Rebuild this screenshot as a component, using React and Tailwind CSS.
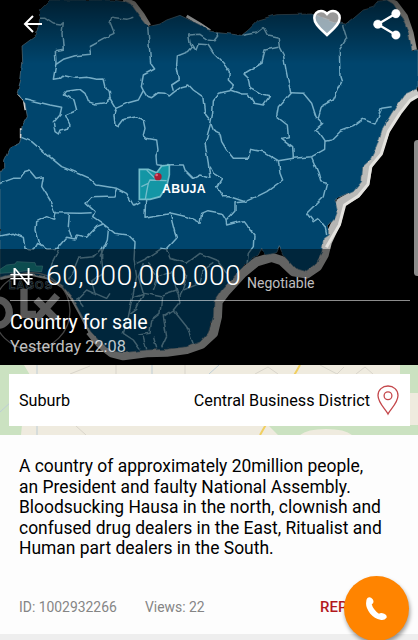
import React from "react";

const LAND =
  "M150 0 L118 32 118 80 104 110 66 138 68 185 62 240 52 278 75 310 82 350 66 378 64 412 58 430 32 442 14 480 14 500 0 520 V832 L40 822 90 818 150 834 188 858 216 892 242 940 268 990 300 1025 335 1052 370 1058 440 1050 500 1048 560 1040 600 1026 624 1000 640 950 642 905 665 870 720 810 750 780 775 765 785 745 798 765 830 758 838 740 850 765 885 805 920 815 945 795 965 760 970 715 985 705 985 680 1008 655 1014 640 1005 600 1060 575 1085 545 1088 500 1110 480 1130 440 1148 385 1175 340 1215 282 1254 265 V150 L1236 150 1226 100 1205 50 1180 12 1160 0 1135 4 1120 22 1090 30 1055 60 1040 72 1010 68 940 42 830 44 775 60 745 90 725 106 655 98 624 92 600 75 540 46 500 60 480 72 445 80 420 50 395 15 370 5 340 0 Z";

// State borders, drawn on a 1254 x 1095 grid
const BORDERS = [
  "M118 55 L135 55 160 72 182 75 190 68 186 100 190 148 166 152 168 190 160 238 178 235 188 226 225 235 262 232 290 238 312 237 318 262 328 275 330 295 348 325",
  "M168 193 L190 178 225 167 272 163 268 138 310 115 342 100 330 70 335 52 380 58 400 52",
  "M443 80 L448 140 452 190 464 207 430 225 424 260 430 272 415 300 385 308 348 325 342 345 345 375 355 380 372 358 410 350 430 362 435 385 430 405 440 415 470 420 474 450 468 470 470 494",
  "M430 272 L440 288 455 293 475 278 495 280 508 288 520 278 545 260 566 255 580 270 608 290 614 340 630 360",
  "M624 134 L595 132 588 150 578 140 565 155 532 168 530 195 538 240 515 255 520 272",
  "M624 120 L600 103 566 105 570 128 578 140 M624 120 L645 122 656 108 650 98",
  "M75 296 L110 305 150 315 185 322 180 345 160 368 165 395 175 402 180 390 205 385 210 375 196 345 230 330 222 300 190 285 200 274 240 268 255 280 265 305 285 312 315 308 330 295",
  "M64 412 L95 425 130 455 185 500 240 522 270 535 290 555 350 565 380 580 400 615 418 605",
  "M0 550 L40 535 60 535 72 518 90 513 108 535 130 530 125 560 150 600 165 638 240 640 272 638",
  "M470 494 L500 498 510 494 550 495 555 510 580 535 600 525 615 530 630 535 625 490 615 430 632 370",
  "M350 565 L342 588 275 590 258 610 285 635 278 650 310 672 345 700 385 705 405 725 402 780 410 830 400 880 385 950 370 1000 400 1020 420 1048",
  "M208 642 L205 680 215 715 M0 708 L40 700 70 712 75 745 100 748 110 730 120 735 108 690 110 665 140 650 160 658 165 638",
  "M120 735 L145 748 175 745 200 715 225 720 230 705 260 712 290 680 310 672 M325 690 L322 720 300 770",
  "M150 828 L155 790 175 750 M205 840 L225 800 235 775 280 770 305 745 305 775 310 820 275 845 285 880 320 895 330 880 M230 900 L260 870 282 880 M250 920 L230 895",
  "M437 600 L435 655 515 640 560 650 600 670 605 640 624 632 665 640 678 660 705 630 705 608 735 605",
  "M510 640 L525 700 530 715 500 748 485 745 440 775 410 790 M500 750 L510 775 560 790 600 760 650 780 680 820 M640 790 L610 810 600 850 550 870",
  "M430 790 L415 830 430 880 485 890 480 940 455 960 450 1000 415 1005 M485 885 L530 870 540 905 520 930 490 950 500 1010 M520 930 L560 980 580 1032",
  "M445 790 L475 830 460 870 M475 830 L515 815 530 870 M540 890 L560 830 540 800 M400 890 L430 880 410 925 390 940 M430 1010 L440 1048 M460 1010 L470 1045 M500 1010 L485 1042",
  "M624 135 L640 160 670 190 688 215 685 240 700 255 690 272 655 280 640 300 638 340 632 370 640 390 660 400 665 425 680 450 700 475 745 475 752 448 790 455 835 482 880 475 935 470 974 448 975 422 960 400 945 390 968 370 948 350 935 310 910 280 872 278",
  "M690 270 L725 282 745 282 762 310 790 315 808 290 785 285 750 265 745 235 732 222 785 190 795 150 835 142",
  "M728 106 L770 98 790 82 802 105 835 112 838 142 850 165 860 220 872 278 855 298 835 320 830 350 862 375 865 410 845 415 878 440 880 475",
  "M1028 75 L1040 115 1018 150 1020 230 1025 245 1000 300 965 320 955 355",
  "M974 424 L995 420 1020 395 1060 380 1090 358 1125 372 1145 325 1175 320",
  "M835 482 L840 520 848 540 800 575 770 590 735 605 690 590 670 590 650 560 665 535 640 520 630 500",
  "M935 472 L955 520 962 545 980 550 970 590 920 640 940 665 955 655 975 680 980 705",
  "M678 660 L680 675 730 662 762 705 760 740 745 760 740 800",
];

const CountryMap = () => (
  <svg viewBox="0 0 1254 1095" className="absolute inset-0 h-full w-full" preserveAspectRatio="none">
    <defs>
      <linearGradient id="rim" x1="0" y1="0" x2="1" y2="0">
        <stop offset="0" stopColor="#b5b7b6" />
        <stop offset="0.75" stopColor="#b5b5b3" />
        <stop offset="1" stopColor="#c8c8c5" />
      </linearGradient>
      <filter id="soft">
        <feGaussianBlur stdDeviation="2" />
      </filter>
      <filter id="rough" x="0" y="0" width="1" height="1" colorInterpolationFilters="sRGB">
        <feTurbulence type="fractalNoise" baseFrequency="0.04" numOctaves="1" seed="4" />
        <feDisplacementMap in="SourceGraphic" scale="12" xChannelSelector="R" yChannelSelector="G" />
      </filter>
      <clipPath id="landClip">
        <path d={LAND} />
      </clipPath>
    </defs>
    <rect width="1254" height="1095" fill="#000" />
    <g filter="url(#soft)" fill="none" strokeLinejoin="round">
      <path d="M0 834 L40 824 90 820 150 834 190 860 218 896 245 945 270 993 300 1028" stroke="#b3babb" strokeWidth="13" />
      <path
        d="M270 993 L300 1030 335 1058 370 1067 440 1058 500 1056 560 1048 605 1032 640 1000 652 950 654 905 675 877 727 820 770 785 815 772 845 782 880 815 920 822 952 800 972 765 982 725 1010 665 1022 608 1068 582 1094 550 1104 495 1134 455 1156 390 1190 332 1222 292 1254 277"
        stroke="url(#rim)"
        strokeWidth="28"
      />
      <path d="M979 742 L1018 675 1034 615 1075 588 1104 553 1112 500 1144 462 1165 395 1200 340 1230 302 1254 288" stroke="#e4e3df" strokeWidth="9" />
      <path d="M370 0 L400 12 425 45 445 78 M1150 0 L1185 10 1215 50 1232 100 1242 150" stroke="#aaa9a4" strokeWidth="18" />
      <path d="M560 48 L600 72 630 92 M55 280 L73 300 78 330 M64 385 V415" stroke="#d5d8d8" strokeWidth="9" />
    </g>
    <g filter="url(#rough)">
      <path d={LAND} fill="#00456d" stroke="#5d7886" strokeWidth="2" />
      <g clipPath="url(#landClip)" fill="none" stroke="#76adc6" strokeWidth="4.5" strokeLinejoin="round">
        {BORDERS.map((d) => (
          <path key={d} d={d} />
        ))}
      </g>
    </g>
    <path d="M0 808 L20 795 45 792 50 785 105 788 108 798 128 798 125 815 80 812 30 818 0 820 Z" fill="#168a90" stroke="#5fb3b8" strokeWidth="2" />
    <path d="M418 508 L445 508 470 518 485 498 508 495 508 525 500 560 480 590 450 598 418 598 Z" fill="#1396a5" stroke="#73bdcb" strokeWidth="5" />
    <path d="M424 560 L445 550 450 540 500 542 M445 550 L440 575 436 598 M440 510 L465 535" fill="none" stroke="#73bdcb" strokeWidth="4" />
    <circle cx="474" cy="530" r="11" fill="#a51d35" />
    <circle cx="470" cy="525" r="4" fill="#e0637a" />
    <text x="486" y="579" fontSize="37" fontWeight="700" fill="#fff" fontFamily="Liberation Sans, sans-serif" textLength="131">
      ABUJA
    </text>
    <text x="26" y="867" fontSize="33" fontWeight="700" fill="#0a141a" stroke="#7d99a3" strokeWidth="1.5" fontFamily="Liberation Sans, sans-serif" textLength="130">
      LAGOS
    </text>
    {/* watermark */}
    <g opacity="0.9" fill="none">
      <circle cx="95" cy="933" r="115" stroke="#8a8a8a" strokeWidth="4" />
      <ellipse cx="-6" cy="938" rx="34" ry="38" stroke="#b0b0b0" strokeWidth="22" />
      <path d="M72 866 V943 H108 M108 898 L168 958 M172 886 L108 958" stroke="#b0b0b0" strokeWidth="22" />
    </g>
  </svg>
);

const ShareIcon = () => (
  <svg viewBox="0 0 84 94" className="mt-[9px] h-[31px] w-[28px]" fill="#fff" stroke="#fff">
    <path d="M69 14 L14 46 69 79" fill="none" strokeWidth="7" />
    <circle cx="69" cy="14" r="13" />
    <circle cx="14" cy="46" r="13" />
    <circle cx="69" cy="79" r="13" />
  </svg>
);

const Hero = () => (
  <section className="relative flex h-[365px] flex-col justify-between overflow-hidden bg-black text-white">
    <CountryMap />
    <header className="relative flex h-16 items-start justify-between bg-linear-to-b from-black/55 to-transparent pr-[17px] pl-[23px]">
      <svg viewBox="0 0 19 18" className="mt-[15px] h-[18px] w-[19px]" fill="none" stroke="#fff" strokeWidth="2">
        <path d="M19 9 H2 M10 1 L2 9 10 17" />
      </svg>
      <div className="flex items-start gap-[32px]">
        <svg viewBox="0 0 28 28" className="mt-[9px] size-[28px]">
          <path
            d="M14 26 L11.9 24 C5 17.8 1.3 13.9 1.3 8.9 C1.3 4.9 4.3 2 8 2 C10.3 2 12.6 3.1 14 5 C15.4 3.1 17.7 2 20 2 C23.7 2 26.7 4.9 26.7 8.9 C26.7 13.9 23 17.8 16.1 24 Z"
            fill="#ffffff99"
            stroke="#fff"
            strokeWidth="2.5"
          />
        </svg>
        <ShareIcon />
      </div>
    </header>
    <div className="relative h-[116px] bg-black/45 pr-[8px] pl-[10px]">
      <div className="flex h-[52px] items-baseline border-b border-white/55 pt-[8px]">
        <span className="w-[36px] text-[24px] leading-[38px] font-light">
          <span className="inline-block origin-left scale-x-[1.25]">₦</span>
        </span>
        <span className="w-[201px] text-[28.5px] leading-[38px] font-light tracking-[0.35px] whitespace-nowrap">60,000,000,000</span>
        <span className="relative top-[3px] text-[14px] leading-5 text-white/75">Negotiable</span>
      </div>
      <h1 className="mt-[10px] text-[19.5px] leading-6 whitespace-nowrap">Country for sale</h1>
      <p className="text-[16.3px] leading-6 text-white/75">Yesterday 22:08</p>
    </div>
  </section>
);

const LocationBar = () => (
  <section className="relative h-[70px] bg-[#efebdf] py-[9px] pr-[8px] pl-[9px]">
    <svg viewBox="0 0 418 70" className="absolute inset-0 h-full w-full">
      <path d="M0 0 H24 L30 10 22 60 21 70 H0 Z M400 0 H418 V28 H400 Z M268 60 H418 V70 H352 Q345 64 326 64 T300 70 H278 Z" fill="#cbe2c1" />
      <path d="M300 0 L260 70" stroke="#f1cf60" strokeWidth="2" />
      <path d="M37 0 V70 M0 47 L12 36 M219 0 L209 9 M152 0 V9" stroke="#bdcdd6" fill="none" />
      <path d="M70 9 L90 1 M116 0 V9 M185 0 V9 M76 61 L86 70 M255 9 L268 2 278 9 M320 0 L337 9 344 2 M356 9 L365 2 373 9" stroke="#d9d5cb" fill="none" />
    </svg>
    <div className="relative flex h-[52px] items-center bg-white pr-[10px] pl-[10px] text-[16.2px]">
      <span className="flex-1 pt-[2px]">Suburb</span>
      <span className="pt-[2px] whitespace-nowrap">Central Business District</span>
      <svg viewBox="0 0 24 32" className="ml-[6px] h-[32px] w-[24px]" fill="none" stroke="#c4474b" strokeWidth="1.3">
        <path d="M12 30 C10 25.5 2 19 2 11.5 C2 5.8 6.5 2 12 2 S22 5.8 22 11.5 C22 19 14 25.5 12 30 Z" />
        <circle cx="12" cy="11.8" r="3.9" />
      </svg>
    </div>
  </section>
);

const App = () => (
  <main className="relative flex h-[640px] w-[418px] flex-col overflow-hidden bg-[#fdfdfd] font-[Roboto,sans-serif] text-black">
    <Hero />
    <LocationBar />
    <p className="h-[154px] pt-[21px] pl-[19px] text-[17.45px] leading-[20.6px] whitespace-nowrap">
      A country of approximately 20million people,
      <br />
      an President and faulty National Assembly.
      <br />
      Bloodsucking Hausa in the north, clownish and
      <br />
      confused drug dealers in the East, Ritualist and
      <br />
      Human part dealers in the South.
    </p>
    <div className="flex h-[45px] items-center px-[19px] pb-[9px] text-[13.9px] text-[#858585]">
      <span className="w-[126px]">ID: 1002932266</span>
      <span className="w-[175px]">Views: 22</span>
      <span className="text-[15px] font-medium text-[#b3191d]">REPORT</span>
    </div>
    <div className="h-[6px] bg-[#eeeeee]" />
    <button className="absolute right-[9px] bottom-[-1px] flex size-[65px] items-center justify-center rounded-full bg-[#ff8400] shadow-[1px_3px_4px_#0006]">
      <svg viewBox="92 81 63 70" className="h-[23px] w-[21px]" fill="#fff">
        <path d="M96 84 Q104 78 112 88 Q118 98 109 103 Q113 119 131 132 Q137 128 147 132 Q157 137 154 144 Q147 153 135 150 Q118 147 104 131 Q90 113 92 98 Q92 88 96 84 Z" />
      </svg>
    </button>
    <div className="absolute top-[140px] right-[-3px] h-[136px] w-[7px] rounded bg-[#8c8c8c]" />
  </main>
);

export default App;
